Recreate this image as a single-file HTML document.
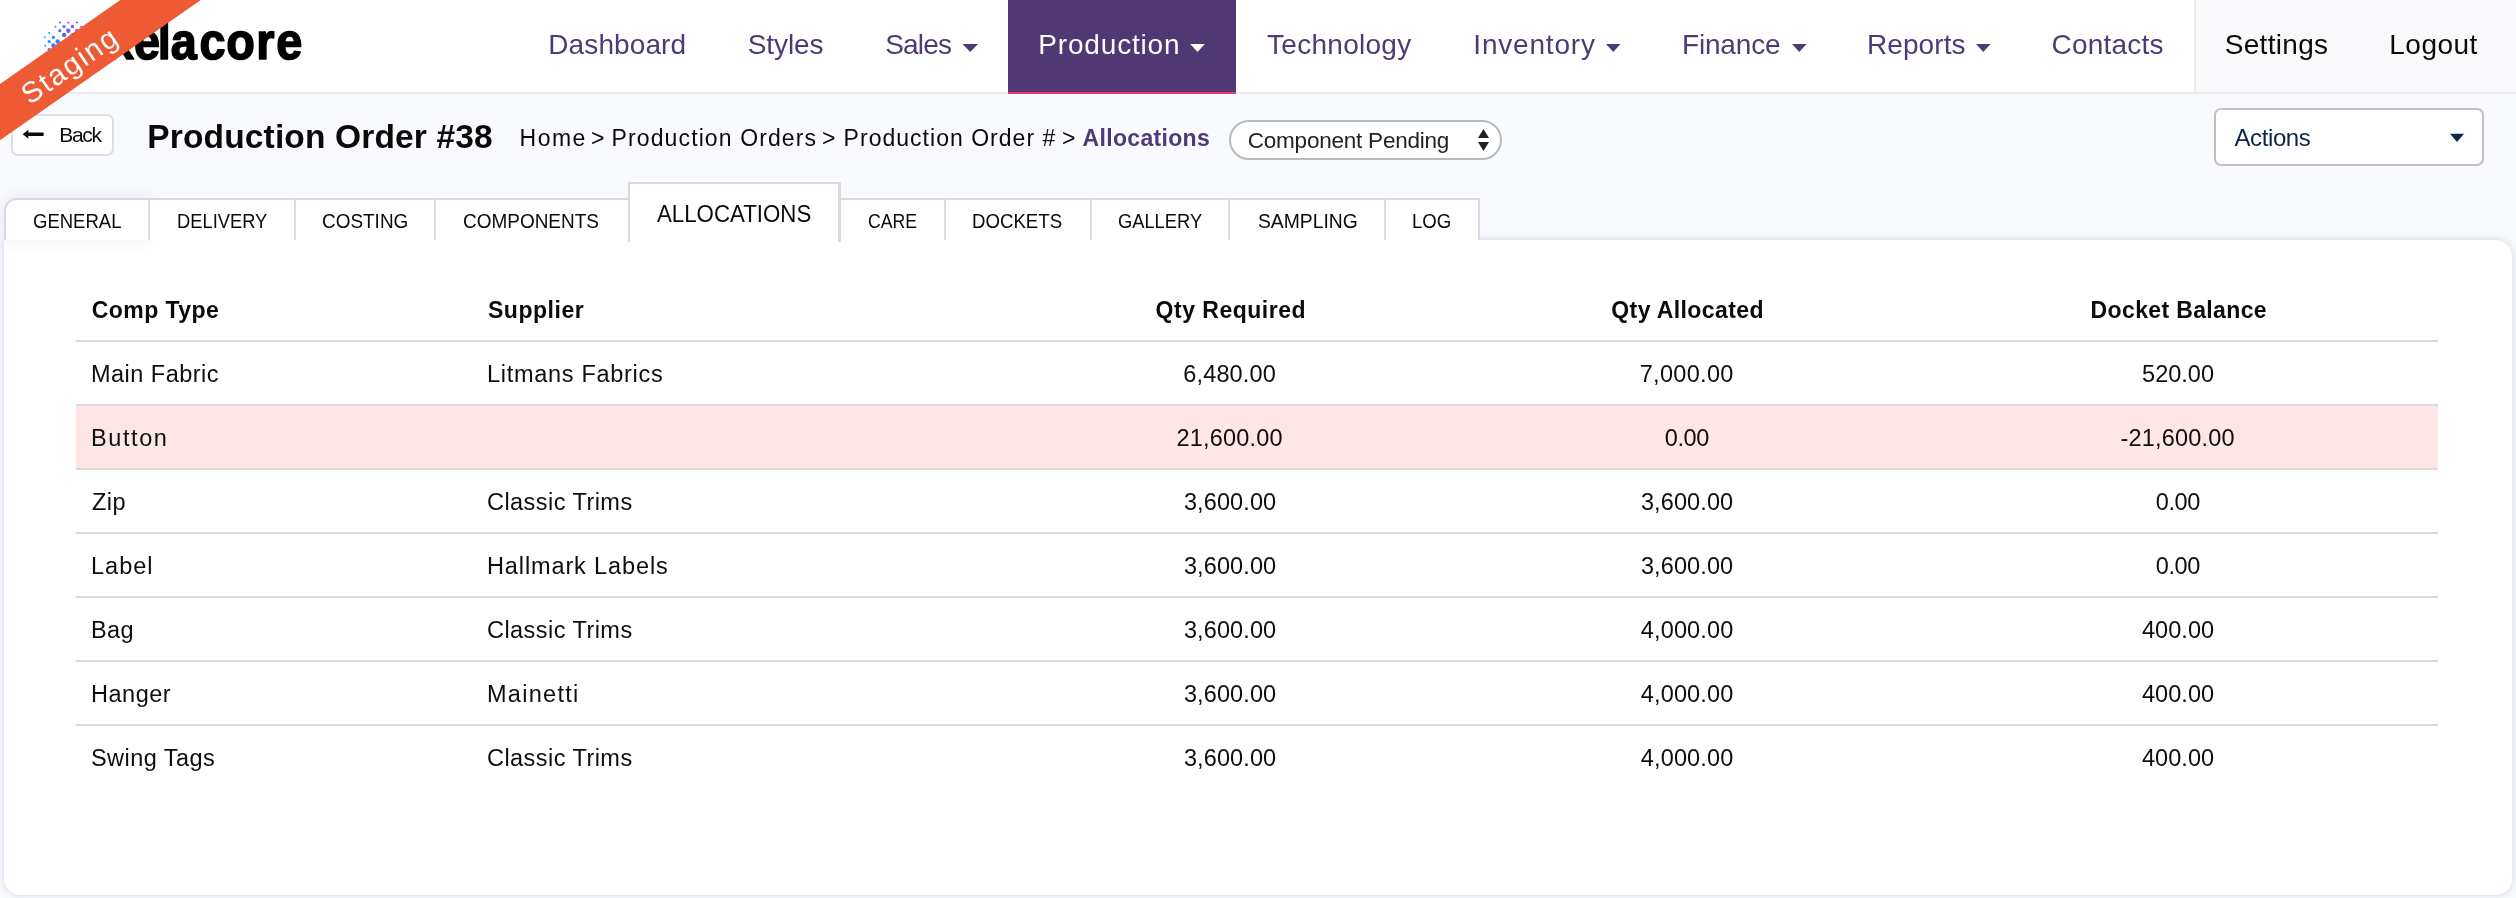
<!DOCTYPE html>
<html lang="en">
<head>
<meta charset="utf-8">
<title>Production Order #38 - Allocations</title>
<style>
*{box-sizing:border-box;margin:0;padding:0}
html,body{width:2516px;height:898px;overflow:hidden;background:#f9fafd}
body{font-family:"Liberation Sans",sans-serif;color:#151515;position:relative}
#app{position:absolute;left:0;top:0;width:2516px;height:898px;overflow:hidden;background:#f9fafd}
#app>*{position:absolute}
.t{position:absolute;white-space:nowrap;line-height:1;transform-origin:0 50%;font-weight:400;will-change:opacity}
/* header */
.hdr{left:0;top:0;width:2516px;height:94px;background:#fff;border-bottom:2px solid #ebebec}
.hdr-right{left:2194px;top:0;width:322px;height:92px;background:#f9f9fb;border-left:2px solid #eeeef1}
.nav-active{left:1008px;top:0;width:228px;height:94px;background:#4f3873;border-bottom:2px solid #ee3674}
svg.ic{position:absolute;overflow:visible}
/* ribbon */
.ribbon{left:-132px;top:41.4px;width:400px;height:45.6px;transform:rotate(-34.8deg);transform-origin:50% 50%}
.ribbon span{position:absolute;left:1.4px;right:0;top:2.6px;line-height:45.6px;text-align:center;color:#fff;font-size:29px;letter-spacing:1.9px}
/* title row */
.back{left:10.5px;top:114.2px;width:103px;height:41.5px;background:#fff;border:2px solid #dcdfe6;border-radius:7px}
.pill{left:1229px;top:120px;width:273px;height:40px;background:#fff;border:2px solid #b4bcbf;border-radius:20px}
.actions{left:2214px;top:108px;width:270px;height:57.5px;background:#fff;border:2px solid #c1c1c1;border-radius:7px}
/* tabs */
.tabs{left:4px;top:198px;width:1476px;height:42px;background:#fff;border:2px solid #d9dade;border-bottom:0;border-top-left-radius:13px}
.sep{top:198px;width:2px;height:42px;background:#dbdce0}
.tab-active{left:628px;top:182px;width:213px;height:60px;background:#fff;border:2px solid #d9dade;border-bottom:0;border-right-width:3px}
.tabshadow{left:4px;top:198px;width:145px;height:42px;border-top-left-radius:13px;box-shadow:0 0 16px rgba(70,80,140,.11)}
/* panel */
.panel{left:4px;top:240px;width:2508px;height:655px;background:#fff;border-radius:0 16px 16px 16px;box-shadow:0 0 7px rgba(90,100,170,.26)}
.ln{left:76px;width:2362px;height:2px;background:#dadbdb}
.pink{left:76px;top:406px;width:2362px;height:62px;background:#ffe6e6}
</style>
</head>
<body>
<div id="app">
  <!-- top navigation -->
  <div class="hdr"></div>
  <div class="hdr-right"></div>
  <div class="nav-active"></div>

  <!-- logo -->
  <svg class="ic" style="left:40px;top:16px" width="270" height="56" viewBox="40 16 270 56">
    <g id="logo-dots"><circle cx="59.9" cy="22.5" r="1.0" fill="#4a6cf5"/><circle cx="68.3" cy="22.8" r="1.0" fill="#7d5cf5"/><circle cx="76.9" cy="22.5" r="1.0" fill="#a040f5"/><circle cx="55.5" cy="26.7" r="1.0" fill="#3d82f7"/><circle cx="64.0" cy="26.5" r="1.6" fill="#6a62f0"/><circle cx="72.5" cy="26.5" r="1.7" fill="#8a50f5"/><circle cx="81.1" cy="26.7" r="1.0" fill="#b03cf5"/><circle cx="59.8" cy="30.7" r="1.6" fill="#4a72f2"/><circle cx="68.3" cy="30.7" r="2.2" fill="#7a5cf2"/><circle cx="76.7" cy="30.4" r="1.6" fill="#9a4cf5"/><circle cx="49.1" cy="33.0" r="1.0" fill="#2e96fa"/><circle cx="64.1" cy="35.0" r="2.2" fill="#5a68f0"/><circle cx="72.4" cy="34.6" r="1.6" fill="#8a55f5"/><circle cx="44.9" cy="37.3" r="1.0" fill="#2ea5fb"/><circle cx="53.4" cy="37.3" r="1.6" fill="#2f8cf8"/><circle cx="49.2" cy="41.5" r="1.6" fill="#2a8ef8"/><circle cx="57.7" cy="41.5" r="2.2" fill="#3f7df5"/><circle cx="45.3" cy="45.7" r="1.0" fill="#2ea0fa"/><circle cx="53.4" cy="45.5" r="2.2" fill="#2f86f6"/><circle cx="49.1" cy="49.4" r="1.6" fill="#2a90f8"/><path d="M64 26.5L68.3 30.7L72.5 26.5M49.2 41.5L53.4 45.5" stroke="#6f78f3" stroke-width="0.7" fill="none" opacity=".7"/></g>
    <g transform="scale(0.9 1)"><text x="120 148.9 175.3 189.8 221.6 251.3 284.8 307" y="59.2" font-family="Liberation Sans, sans-serif" font-weight="700" font-size="52" fill="#000" stroke="#000" stroke-width="1.6" stroke-linejoin="round">xelacore</text></g>
  </svg>

  <!-- nav carets -->
  <svg class="ic" style="left:0;top:0" width="2516" height="94" viewBox="0 0 2516 94">
    <g fill="#4f3a78">
      <polygon points="962.5,44 978,44 970.25,52"/>
      <polygon points="1606,44 1620.5,44 1613.25,52"/>
      <polygon points="1792,44 1806.5,44 1799.25,52"/>
      <polygon points="1976,44 1990.5,44 1983.25,52"/>
    </g>
    <polygon fill="#fff" points="1190.3,44 1204.8,44 1197.55,52"/>
  </svg>

  <!-- title row widgets -->
  <div class="back"></div>
  <svg class="ic" style="left:20px;top:124px" width="30" height="22" viewBox="20 124 30 22">
    <polygon fill="#0a0a0a" points="22.7,134.3 28.3,129.8 28.3,138.8"/>
    <rect fill="#0a0a0a" x="27.5" y="132.6" width="16.2" height="3.4" rx="0.8"/>
  </svg>
  <div class="pill"></div>
  <svg class="ic" style="left:1474px;top:126px" width="20" height="28" viewBox="1474 126 20 28">
    <polygon fill="#222" points="1478,137.9 1489,137.9 1483.5,128.9"/>
    <polygon fill="#222" points="1478,142.1 1489,142.1 1483.5,151"/>
  </svg>
  <div class="actions"></div>
  <svg class="ic" style="left:2446px;top:130px" width="22" height="16" viewBox="2446 130 22 16">
    <polygon fill="#0f2547" points="2450,133.8 2464,133.8 2457,142"/>
  </svg>

  <div class="panel"></div>
  <!-- tabs -->
  <div class="tabshadow"></div>
  <div class="tabs"></div>
  <div class="sep" style="left:148px"></div>
  <div class="sep" style="left:294px"></div>
  <div class="sep" style="left:434px"></div>
  <div class="sep" style="left:944px"></div>
  <div class="sep" style="left:1090px"></div>
  <div class="sep" style="left:1228px"></div>
  <div class="sep" style="left:1384px"></div>

  <!-- content panel -->
  <div class="tab-active"></div>
  <div class="pink"></div>
  <div class="ln" style="top:340px"></div>
  <div class="ln" style="top:404px"></div>
  <div class="ln" style="top:468px"></div>
  <div class="ln" style="top:532px"></div>
  <div class="ln" style="top:596px"></div>
  <div class="ln" style="top:660px"></div>
  <div class="ln" style="top:724px"></div>

  <!-- all text -->
<span class="t " style="top:30.90px;font-size:28px;color:#4f3a78;left:548.30px;letter-spacing:0.099px;">Dashboard</span>
<span class="t " style="top:30.90px;font-size:28px;color:#4f3a78;left:747.80px;letter-spacing:-0.110px;">Styles</span>
<span class="t " style="top:30.90px;font-size:28px;color:#4f3a78;left:885.20px;letter-spacing:-0.810px;">Sales</span>
<span class="t " style="top:30.90px;font-size:28px;color:#fff;left:1038.30px;letter-spacing:0.823px;">Production</span>
<span class="t " style="top:30.90px;font-size:28px;color:#4f3a78;left:1267.00px;letter-spacing:0.283px;">Technology</span>
<span class="t " style="top:30.90px;font-size:28px;color:#4f3a78;left:1473.30px;letter-spacing:0.816px;">Inventory</span>
<span class="t " style="top:30.90px;font-size:28px;color:#4f3a78;left:1682.00px;letter-spacing:-0.174px;">Finance</span>
<span class="t " style="top:30.90px;font-size:28px;color:#4f3a78;left:1867.00px;letter-spacing:0.076px;">Reports</span>
<span class="t " style="top:30.90px;font-size:28px;color:#4f3a78;left:2051.50px;letter-spacing:0.215px;">Contacts</span>
<span class="t " style="top:30.90px;font-size:28px;color:#0b0b0b;left:2224.80px;letter-spacing:0.290px;">Settings</span>
<span class="t " style="top:30.90px;font-size:28px;color:#0b0b0b;left:2389.30px;letter-spacing:0.468px;">Logout</span>
<span class="t " style="top:124.00px;font-size:21px;color:#0b0b0b;left:59.20px;letter-spacing:-1.295px;">Back</span>
<span class="t " style="top:120.00px;font-size:33.5px;color:#0a0a0a;font-weight:700;left:147.30px;letter-spacing:0.148px;">Production Order #38</span>
<span class="t " style="top:126.60px;font-size:23px;color:#0b0b0b;left:519.60px;letter-spacing:1.446px;">Home</span>
<span class="t " style="top:126.60px;font-size:23px;color:#0b0b0b;left:590.90px;">&gt;</span>
<span class="t " style="top:126.60px;font-size:23px;color:#0b0b0b;left:611.60px;letter-spacing:1.110px;">Production Orders</span>
<span class="t " style="top:126.60px;font-size:23px;color:#0b0b0b;left:822.00px;">&gt;</span>
<span class="t " style="top:126.60px;font-size:23px;color:#0b0b0b;left:843.60px;letter-spacing:1.022px;">Production Order #</span>
<span class="t " style="top:126.60px;font-size:23px;color:#0b0b0b;left:1062.00px;">&gt;</span>
<span class="t " style="top:126.60px;font-size:23px;color:#4f3a78;font-weight:700;left:1082.60px;letter-spacing:0.323px;">Allocations</span>
<span class="t " style="top:130.00px;font-size:22.5px;color:#222;left:1247.80px;letter-spacing:-0.227px;">Component Pending</span>
<span class="t " style="top:125.60px;font-size:24px;color:#0f2547;left:2234.50px;letter-spacing:-0.401px;">Actions</span>
<span class="t " style="top:210.00px;font-size:21px;color:#0b0b0b;left:32.92px;letter-spacing:0.000px;transform:scaleX(0.8816);">GENERAL</span>
<span class="t " style="top:210.00px;font-size:21px;color:#0b0b0b;left:176.73px;letter-spacing:0.000px;transform:scaleX(0.8723);">DELIVERY</span>
<span class="t " style="top:210.00px;font-size:21px;color:#0b0b0b;left:322.40px;letter-spacing:0.000px;transform:scaleX(0.9021);">COSTING</span>
<span class="t " style="top:210.00px;font-size:21px;color:#0b0b0b;left:462.90px;letter-spacing:0.000px;transform:scaleX(0.9030);">COMPONENTS</span>
<span class="t " style="top:210.00px;font-size:21px;color:#0b0b0b;left:867.96px;letter-spacing:0.000px;transform:scaleX(0.8406);">CARE</span>
<span class="t " style="top:210.00px;font-size:21px;color:#0b0b0b;left:972.41px;letter-spacing:0.000px;transform:scaleX(0.8875);">DOCKETS</span>
<span class="t " style="top:210.00px;font-size:21px;color:#0b0b0b;left:1117.93px;letter-spacing:0.000px;transform:scaleX(0.8713);">GALLERY</span>
<span class="t " style="top:210.00px;font-size:21px;color:#0b0b0b;left:1258.30px;letter-spacing:0.000px;transform:scaleX(0.9189);">SAMPLING</span>
<span class="t " style="top:210.00px;font-size:21px;color:#0b0b0b;left:1412.31px;letter-spacing:0.000px;transform:scaleX(0.8878);">LOG</span>
<span class="t " style="top:202.80px;font-size:23.5px;color:#0b0b0b;left:657.20px;letter-spacing:0.000px;transform:scaleX(0.9474);">ALLOCATIONS</span>
<span class="t " style="top:299.00px;font-size:23px;color:#0b0b0b;font-weight:700;left:91.80px;letter-spacing:0.433px;">Comp Type</span>
<span class="t " style="top:299.00px;font-size:23px;color:#0b0b0b;font-weight:700;left:488.00px;letter-spacing:0.534px;">Supplier</span>
<span class="t " style="top:299.00px;font-size:23px;color:#0b0b0b;font-weight:700;left:1155.60px;letter-spacing:0.503px;">Qty Required</span>
<span class="t " style="top:299.00px;font-size:23px;color:#0b0b0b;font-weight:700;left:1611.30px;letter-spacing:0.400px;">Qty Allocated</span>
<span class="t " style="top:299.00px;font-size:23px;color:#0b0b0b;font-weight:700;left:2090.60px;letter-spacing:0.361px;">Docket Balance</span>
<span class="t " style="top:363.00px;font-size:23.5px;color:#0e0e0e;left:91.00px;letter-spacing:0.479px;">Main Fabric</span>
<span class="t " style="top:363.00px;font-size:23.5px;color:#0e0e0e;left:487.00px;letter-spacing:0.707px;">Litmans Fabrics</span>
<span class="t " style="top:363.00px;font-size:23.5px;color:#0e0e0e;left:1183.25px;letter-spacing:0.156px;">6,480.00</span>
<span class="t " style="top:363.00px;font-size:23.5px;color:#0e0e0e;left:1639.75px;letter-spacing:0.299px;">7,000.00</span>
<span class="t " style="top:363.00px;font-size:23.5px;color:#0e0e0e;left:2142.10px;letter-spacing:-0.001px;">520.00</span>
<span class="t " style="top:427.00px;font-size:23.5px;color:#0e0e0e;left:91.00px;letter-spacing:1.586px;">Button</span>
<span class="t " style="top:427.00px;font-size:23.5px;color:#0e0e0e;left:1176.50px;letter-spacing:0.191px;">21,600.00</span>
<span class="t " style="top:427.00px;font-size:23.5px;color:#0e0e0e;left:1664.70px;letter-spacing:-0.356px;">0.00</span>
<span class="t " style="top:427.00px;font-size:23.5px;color:#0e0e0e;left:2120.50px;letter-spacing:0.189px;">-21,600.00</span>
<span class="t " style="top:491.00px;font-size:23.5px;color:#0e0e0e;left:92.00px;letter-spacing:0.462px;">Zip</span>
<span class="t " style="top:491.00px;font-size:23.5px;color:#0e0e0e;left:487.00px;letter-spacing:0.453px;">Classic Trims</span>
<span class="t " style="top:491.00px;font-size:23.5px;color:#0e0e0e;left:1183.90px;letter-spacing:0.113px;">3,600.00</span>
<span class="t " style="top:491.00px;font-size:23.5px;color:#0e0e0e;left:1640.90px;letter-spacing:0.113px;">3,600.00</span>
<span class="t " style="top:491.00px;font-size:23.5px;color:#0e0e0e;left:2155.70px;letter-spacing:-0.356px;">0.00</span>
<span class="t " style="top:555.00px;font-size:23.5px;color:#0e0e0e;left:91.00px;letter-spacing:1.005px;">Label</span>
<span class="t " style="top:555.00px;font-size:23.5px;color:#0e0e0e;left:487.00px;letter-spacing:0.876px;">Hallmark Labels</span>
<span class="t " style="top:555.00px;font-size:23.5px;color:#0e0e0e;left:1183.90px;letter-spacing:0.113px;">3,600.00</span>
<span class="t " style="top:555.00px;font-size:23.5px;color:#0e0e0e;left:1640.90px;letter-spacing:0.113px;">3,600.00</span>
<span class="t " style="top:555.00px;font-size:23.5px;color:#0e0e0e;left:2155.70px;letter-spacing:-0.356px;">0.00</span>
<span class="t " style="top:619.00px;font-size:23.5px;color:#0e0e0e;left:91.00px;letter-spacing:0.378px;">Bag</span>
<span class="t " style="top:619.00px;font-size:23.5px;color:#0e0e0e;left:487.00px;letter-spacing:0.453px;">Classic Trims</span>
<span class="t " style="top:619.00px;font-size:23.5px;color:#0e0e0e;left:1183.90px;letter-spacing:0.113px;">3,600.00</span>
<span class="t " style="top:619.00px;font-size:23.5px;color:#0e0e0e;left:1640.75px;letter-spacing:0.156px;">4,000.00</span>
<span class="t " style="top:619.00px;font-size:23.5px;color:#0e0e0e;left:2142.00px;letter-spacing:0.039px;">400.00</span>
<span class="t " style="top:683.00px;font-size:23.5px;color:#0e0e0e;left:91.00px;letter-spacing:0.510px;">Hanger</span>
<span class="t " style="top:683.00px;font-size:23.5px;color:#0e0e0e;left:487.00px;letter-spacing:1.277px;">Mainetti</span>
<span class="t " style="top:683.00px;font-size:23.5px;color:#0e0e0e;left:1183.90px;letter-spacing:0.113px;">3,600.00</span>
<span class="t " style="top:683.00px;font-size:23.5px;color:#0e0e0e;left:1640.75px;letter-spacing:0.156px;">4,000.00</span>
<span class="t " style="top:683.00px;font-size:23.5px;color:#0e0e0e;left:2142.00px;letter-spacing:0.039px;">400.00</span>
<span class="t " style="top:747.00px;font-size:23.5px;color:#0e0e0e;left:91.00px;letter-spacing:0.431px;">Swing Tags</span>
<span class="t " style="top:747.00px;font-size:23.5px;color:#0e0e0e;left:487.00px;letter-spacing:0.453px;">Classic Trims</span>
<span class="t " style="top:747.00px;font-size:23.5px;color:#0e0e0e;left:1183.90px;letter-spacing:0.113px;">3,600.00</span>
<span class="t " style="top:747.00px;font-size:23.5px;color:#0e0e0e;left:1640.75px;letter-spacing:0.156px;">4,000.00</span>
<span class="t " style="top:747.00px;font-size:23.5px;color:#0e0e0e;left:2142.00px;letter-spacing:0.039px;">400.00</span>

  <!-- staging ribbon -->
  <svg class="ic" style="left:0;top:0" width="210" height="150" viewBox="0 0 210 150"><polygon fill="#ee5a33" points="120.25,0 200.75,0 0,140.2 0,84"/></svg>
  <div class="ribbon"><span>Staging</span></div>
</div>
</body>
</html>
